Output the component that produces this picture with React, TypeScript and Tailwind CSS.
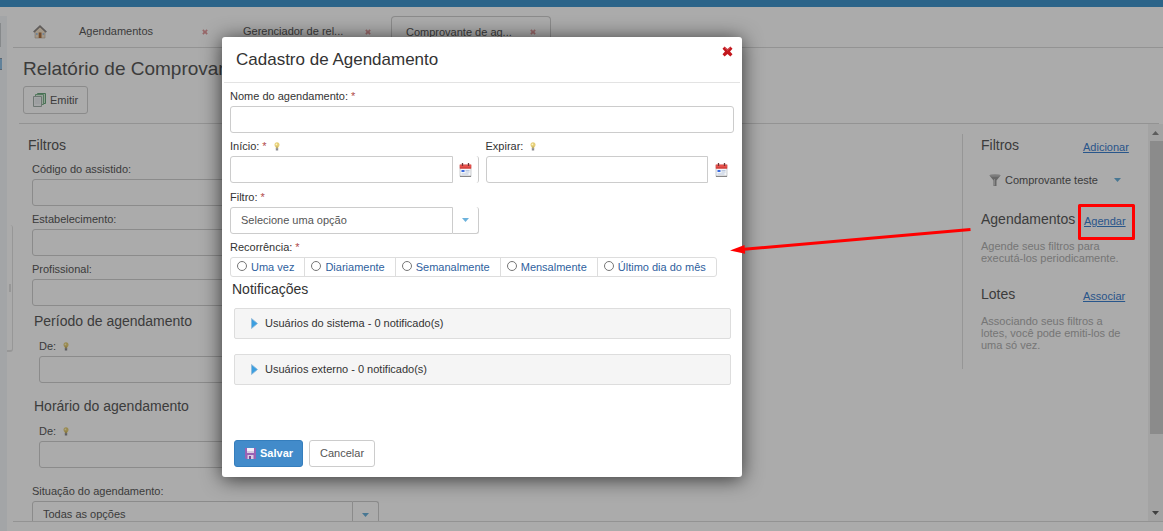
import React, { useState } from 'react';

const HomeIcon = () => (
  <svg width="14" height="14" viewBox="0 0 14 14" aria-hidden="true">
    <path d="M2 6.5 7 2l5 4.500V13H2z" fill="#f3e3cc" stroke="#c0ad98" strokeWidth=".6" />
    <path d="M.7 7.200 7 1.200l6.300 6" fill="none" stroke="#8f8a87" strokeWidth="1.700" />
    <rect x="5.700" y="7.500" width="2.800" height="5.500" fill="#b0723f" />
    <path d="M3 8h1.600v2H3zM9.600 8h1.600v2H9.600z" fill="#a9c3e0" />
  </svg>
);

const CopyIcon = () => (
  <svg width="13" height="14" viewBox="0 0 13 14" aria-hidden="true">
    <path d="M4.500.5h8v10h-8z" fill="#d8efdc" stroke="#6aa87c" />
    <path d="M2.500 1.500h8v10h-8z" fill="#e2f3e5" stroke="#7fb78f" />
    <path d="M.5 3.500h8v10h-8z" fill="#f4f6f8" stroke="#a3b0aa" />
    <path d="M2 6h5M2 8h5M2 10h5" stroke="#d8dee3" strokeWidth=".7" />
  </svg>
);

const CrossIcon = ({ size = 11, color = '#c3171d' }: { size?: number; color?: string }) => (
  <svg width={size} height={size} viewBox="0 0 11 11" aria-hidden="true">
    <path
      d="M2.6.5 5.5 3 8.4.5l2.1 2.2L8 5.5l2.5 2.8-2.1 2.2L5.5 8l-2.9 2.500L.5 8.3 3 5.5.5 2.7z"
      fill={color}
    />
    <path d="M2.6 1.400 5.500 4l2.900-2.600" fill="none" stroke="#fff" strokeOpacity=".3" />
  </svg>
);

const BulbIcon = () => (
  <svg width="6" height="9" viewBox="0 0 6 9" aria-hidden="true">
    <circle cx="3" cy="2.800" r="2.500" fill="#e6cf78" />
    <path d="M1.800 4.500h2.400v2H1.800z" fill="#c9b266" />
    <path d="M1.800 6.200h2.400v2.300H1.800z" fill="#8d8d92" />
    <circle cx="2.400" cy="2.300" r=".9" fill="#fdf5c5" />
  </svg>
);

const CalendarIcon = () => (
  <svg width="13" height="14" viewBox="0 0 13 14" aria-hidden="true">
    <path d="M1 2h11v11.500H1z" fill="#f4f6f8" stroke="#b5b8bc" strokeWidth=".7" />
    <path d="M.7 1.500h11.600v4H.7z" fill="#e8504b" />
    <path d="M1 5h11" stroke="#c53733" />
    <path d="M3.500 0v3M9.500 0v3" stroke="#713434" strokeWidth="1.300" />
    <path d="M2.500 7h3v2h-3z" fill="#3b6be0" />
    <path d="M6.500 7.500h4M6.500 9h4M2.500 11h7" stroke="#b9c6dc" />
    <path d="M1 13.300h11" stroke="#777" />
  </svg>
);

const FloppyIcon = () => (
  <svg width="11" height="11" viewBox="0 0 11 11" aria-hidden="true">
    <path d="M0 0h11v11H1L0 10z" fill="#9a62b4" />
    <path d="M2 0h7v5H2z" fill="#f4eef8" />
    <path d="M2 3h7v2H2z" fill="#d9cce4" />
    <path d="M2.500 7h6v4h-6z" fill="#dccbe4" />
    <path d="M4 8h2v3H4z" fill="#7b4a92" />
  </svg>
);

const FunnelIcon = () => (
  <svg width="12" height="12" viewBox="0 0 12 12" aria-hidden="true">
    <path d="M.5 1.500 4.500 6.500V12h3V6.500l4-5z" fill="#9c9c9c" />
    <ellipse cx="6" cy="1.500" rx="5.500" ry="1.300" fill="#bcbcbc" />
    <path d="M5.500 5v6.500" stroke="#c9c9c9" />
  </svg>
);

const Caret = () => (
  <svg width="7" height="4" viewBox="0 0 7 4" aria-hidden="true">
    <path d="M0 0h7L3.500 4z" fill="#6cb2dc" />
  </svg>
);

const PlayIcon = () => (
  <svg width="7" height="11" viewBox="0 0 7 11" aria-hidden="true">
    <path d="M.5.5v10l6-5z" fill="#3c9fe0" stroke="#8fb9d8" strokeWidth=".8" />
  </svg>
);

const Required = () => <span className="text-[#b04a4a]">*</span>;

const DateField = ({ id, edge }: { id: string; edge?: boolean }) => (
  <div className="flex h-[27px]">
    <input
      id={id}
      type="text"
      className="min-w-0 flex-1 rounded-l-[3px] border border-[#ccc] bg-white px-2 outline-none"
    />
    <button
      type="button"
      aria-label="Abrir calendário"
      className={
        edge
          ? 'flex w-[26px] items-center justify-center rounded-r-[3px] border-r border-[#ccc]'
          : 'flex w-[26px] items-center justify-center'
      }
    >
      <CalendarIcon />
    </button>
  </div>
);

const filtros = [
  { id: 'codigo', label: 'Código do assistido:' },
  { id: 'estabelecimento', label: 'Estabelecimento:' },
  { id: 'profissional', label: 'Profissional:' },
];

const periodos = [
  { id: 'periodo', titulo: 'Período de agendamento' },
  { id: 'horario', titulo: 'Horário do agendamento' },
];

const recorrencias = ['Uma vez', 'Diariamente', 'Semanalmente', 'Mensalmente', 'Último dia do mês'];

const Tabs = () => (
  <nav className="flex h-8 shrink-0 items-stretch border-b border-[#dcdcdc] pl-5">
    <a href="#inicio" aria-label="Início" className="flex w-[46px] items-center">
      <HomeIcon />
    </a>
    <div className="flex w-[164px] items-center justify-between pr-[35px]">
      <a href="#agendamentos">Agendamentos</a>
      <button type="button" aria-label="Fechar"><CrossIcon size={6} color="#e39a9d" /></button>
    </div>
    <div className="flex w-[148px] items-center justify-between pr-5">
      <a href="#gerenciador">Gerenciador de rel...</a>
      <button type="button" aria-label="Fechar"><CrossIcon size={6} color="#e39a9d" /></button>
    </div>
    <div className="flex w-40 items-center justify-between rounded-t border border-b-0 border-[#d0d0d0] px-[14px]">
      <a href="#comprovante">Comprovante de ag...</a>
      <button type="button" aria-label="Fechar"><CrossIcon size={6} color="#e39a9d" /></button>
    </div>
  </nav>
);

const FilterForm = () => (
  <form className="w-[366px] pt-3">
    <h2 className="pl-[9px] text-[14px] leading-[18px]">Filtros</h2>
    <div className="pl-[13px] pt-[2px]">
      {filtros.map(f => (
        <div key={f.id}>
          <label htmlFor={f.id} className="flex h-[23px] items-center pt-1">{f.label}</label>
          <input id={f.id} type="text" className="block h-[27px] w-full rounded-[3px] border border-[#cfcfcf] px-2" />
        </div>
      ))}
      {periodos.map(p => (
        <fieldset key={p.id} className="pb-2 pt-[2px]">
          <legend className="float-left pl-[2px] pt-1 text-[14px] leading-[18px]">{p.titulo}</legend>
          <div className="clear-both pl-[7px]">
            <label htmlFor={p.id} className="flex h-[26px] items-center gap-[7px] pt-[6px]">
              De: <BulbIcon />
            </label>
            <input id={p.id} type="text" className="block h-[27px] w-full rounded-[3px] border border-[#cfcfcf] px-2" />
          </div>
        </fieldset>
      ))}
      <label htmlFor="situacao" className="mt-[9px] flex h-3 items-center">Situação do agendamento:</label>
      <div className="mt-1 flex h-[27px] w-[347px]">
        <select id="situacao" className="flex-1 appearance-none rounded-l-[3px] border border-[#cfcfcf] px-[10px]">
          <option>Todas as opções</option>
        </select>
        <span className="flex w-[26px] items-center justify-center rounded-r-[3px] border-r border-t border-[#cfcfcf]">
          <Caret />
        </span>
      </div>
    </div>
  </form>
);

const SideColumn = () => (
  <aside className="mt-[10px] h-[235px] w-[186px] shrink-0 border-l border-[#e0e0e0] pl-[18px]">
    <div className="flex items-end pt-[2px]">
      <h2 className="w-[102px] text-[14px] leading-[18px]">Filtros</h2>
      <a href="#adicionar" className="text-[#3d80cf] underline">Adicionar</a>
    </div>
    <div className="flex h-[52px] items-center pl-2">
      <FunnelIcon />
      <span className="w-[113px] pl-1">Comprovante teste</span>
      <Caret />
    </div>
    <div className="flex items-end pt-1">
      <h2 className="w-[103px] text-[14px] leading-[18px]">Agendamentos</h2>
      <a href="#agendar" className="text-[#3d80cf] underline">Agendar</a>
    </div>
    <p className="w-[150px] pt-3 leading-3 text-[#b0b0b0]">Agende seus filtros para executá-los periodicamente.</p>
    <div className="flex items-end pt-[21px]">
      <h2 className="w-[102px] text-[14px] leading-[18px]">Lotes</h2>
      <a href="#associar" className="text-[#3d80cf] underline">Associar</a>
    </div>
    <p className="w-[150px] pt-3 leading-3 text-[#b0b0b0]">
      Associando seus filtros a lotes, você pode emiti-los de uma só vez.
    </p>
  </aside>
);

const Scrollbar = () => (
  <div className="flex w-[15px] shrink-0 flex-col items-center bg-[#f3f3f3]">
    <span className="flex h-[17px] items-center">
      <svg width="7" height="4" viewBox="0 0 7 4"><path d="M0 4h7L3.500 0z" fill="#8a8a8a" /></svg>
    </span>
    <span className="ml-[2px] h-[293px] w-[13px] bg-[#d0d0d0]" />
    <span className="mt-auto flex h-[17px] items-center">
      <svg width="7" height="4" viewBox="0 0 7 4"><path d="M0 0h7L3.500 4z" fill="#606060" /></svg>
    </span>
  </div>
);

const ScheduleDialog = ({ onClose }: { onClose: () => void }) => {
  const [recorrencia, setRecorrencia] = useState('');

  return (
    <div
      role="dialog"
      aria-labelledby="dialog-title"
      className="absolute left-[222px] top-[37px] w-[520px] rounded-[3px] bg-white pb-[10px] text-[#333] shadow-[0_2px_20px_rgba(0,0,0,0.7)]"
    >
      <header className="mx-[2px] flex h-[46px] items-center justify-between border-b border-[#e3e3e3] pl-3 pr-[7px]">
        <h1 id="dialog-title" className="text-[17px] leading-5">Cadastro de Agendamento</h1>
        <button type="button" aria-label="Fechar" onClick={onClose} className="self-start pt-[9px]">
          <CrossIcon />
        </button>
      </header>
      <form className="px-2">
        <label htmlFor="nome" className="flex h-[23px] items-center gap-[3px] pt-1">
          Nome do agendamento: <Required />
        </label>
        <input id="nome" type="text" className="block h-[27px] w-full rounded-[3px] border border-[#ccc] px-2" />
        <div className="grid grid-cols-2 gap-[7px]">
          <div>
            <label htmlFor="inicio" className="flex h-[23px] items-center gap-[3px] pt-1">
              Início: <Required /> <span className="pl-1"><BulbIcon /></span>
            </label>
            <DateField id="inicio" edge />
          </div>
          <div>
            <label htmlFor="expirar" className="flex h-[23px] items-center gap-[7px] pt-1">
              Expirar: <BulbIcon />
            </label>
            <DateField id="expirar" />
          </div>
        </div>
        <label htmlFor="filtro" className="flex h-6 items-center gap-[3px] pt-1">
          Filtro: <Required />
        </label>
        <div className="flex h-[27px] w-[249px]">
          <select
            id="filtro"
            className="flex-1 appearance-none rounded-l-[3px] border border-[#ccc] px-[10px] text-[#555]"
          >
            <option>Selecione uma opção</option>
          </select>
          <span className="flex w-[26px] items-center justify-center rounded-r-[3px] border-b border-r border-[#ccc]">
            <Caret />
          </span>
        </div>
        <fieldset>
          <legend className="flex h-[23px] items-center gap-[3px] pt-1">
            Recorrência: <Required />
          </legend>
          <div className="flex h-5 w-fit divide-x divide-[#ddd] rounded-[3px] border border-[#ddd] text-[#2f5f9e]">
            {recorrencias.map(r => (
              <label key={r} className="flex items-center gap-1 pl-[6px] pr-[10px]">
                <input
                  type="radio"
                  name="recorrencia"
                  checked={recorrencia === r}
                  onChange={() => setRecorrencia(r)}
                  className="mb-[2px] size-[10px] appearance-none rounded-full border border-[#767676] checked:bg-[#428bca]"
                />
                {r}
              </label>
            ))}
          </div>
        </fieldset>
        <h2 className="pl-[2px] pt-[3px] text-[14px] leading-[18px]">Notificações</h2>
        <div className="flex flex-col gap-[15px] pl-1 pr-[3px] pt-[10px]">
          {['Usuários do sistema', 'Usuários externo'].map(u => (
            <button
              key={u}
              type="button"
              className="flex h-[31px] items-center gap-[7px] rounded-[2px] border border-[#ddd] bg-[#f5f5f5] pl-4"
            >
              <PlayIcon />
              {u} - 0 notificado(s)
            </button>
          ))}
        </div>
        <footer className="flex gap-[6px] pl-1 pt-[55px]">
          <button
            type="button"
            className="flex h-[27px] items-center gap-1 rounded-[3px] border border-[#357ebd] bg-[#428bca] pl-[10px] pr-[9px] font-bold text-white"
          >
            <FloppyIcon />
            Salvar
          </button>
          <button
            type="button"
            onClick={onClose}
            className="h-[27px] rounded-[3px] border border-[#ccc] bg-white px-[10px] text-[#555]"
          >
            Cancelar
          </button>
        </footer>
      </form>
    </div>
  );
};

// Red frame round "Agendar" and the arrow that leads to the dialog
const Callout = () => (
  <svg
    className="pointer-events-none absolute left-[722px] top-[196px]"
    width="420"
    height="64"
    viewBox="722 196 420 64"
    aria-hidden="true"
  >
    <rect x="1079.500" y="205.500" width="54" height="33" fill="none" stroke="#f00" strokeWidth="3" strokeLinejoin="round" />
    <path d="M970.500 229.500 744 249.200" stroke="#f00" strokeWidth="3" />
    <path d="M730 250.500 744.500 245l.6 8.800z" fill="#f00" />
  </svg>
);

export default function App() {
  const [open, setOpen] = useState(true);

  return (
    <div className="relative flex h-screen flex-col overflow-hidden bg-white font-['Liberation_Sans',Arial,sans-serif] text-[11px] leading-[13px] text-[#5a5a5a]">
      <div className="h-[7px] shrink-0 bg-[#4195cd]" />
      <div className="flex min-h-0 flex-1 pt-[9px]">
        <div className="w-[7px] shrink-0 bg-[#f3f6fa] pt-[7px]">
          <div className="h-6 w-px bg-[#c8ccd0]" />
          <div className="mt-[11px] h-3 w-[2px] border-y border-[#8898aa] bg-[#8fc0e6]" />
        </div>
        <main className="ml-[6px] flex min-w-0 flex-1 flex-col">
          <Tabs />
          <div className="ml-[6px] mr-1 border-b border-[#dcdcdc] pb-[9px] pl-1 pt-[9px]">
            <h1 className="text-[19px] leading-6">Relatório de Comprovante</h1>
            <button
              type="button"
              className="mt-[5px] flex h-7 items-center gap-1 rounded-[3px] border border-[#cfcfcf] px-[9px]"
            >
              <CopyIcon />
              Emitir
            </button>
          </div>
          <div className="flex min-h-0 flex-1 overflow-hidden border-b border-[#dcdcdc] pl-[6px]">
            <FilterForm />
            <div className="flex-1" />
            <SideColumn />
            <Scrollbar />
          </div>
          <div className="h-[9px] shrink-0" />
        </main>
      </div>
      <div className="absolute left-[7px] top-[225px] flex h-[127px] w-[6px] items-center rounded-r-[3px] border-b-2 border-r border-[#e2e2e2]">
        <span className="ml-[2px] h-2 w-[2px] bg-[#e2e2e2]" />
      </div>
      {open && (
        <>
          <div className="absolute inset-0 bg-black/33" />
          <ScheduleDialog onClose={() => setOpen(false)} />
          <Callout />
        </>
      )}
    </div>
  );
}
